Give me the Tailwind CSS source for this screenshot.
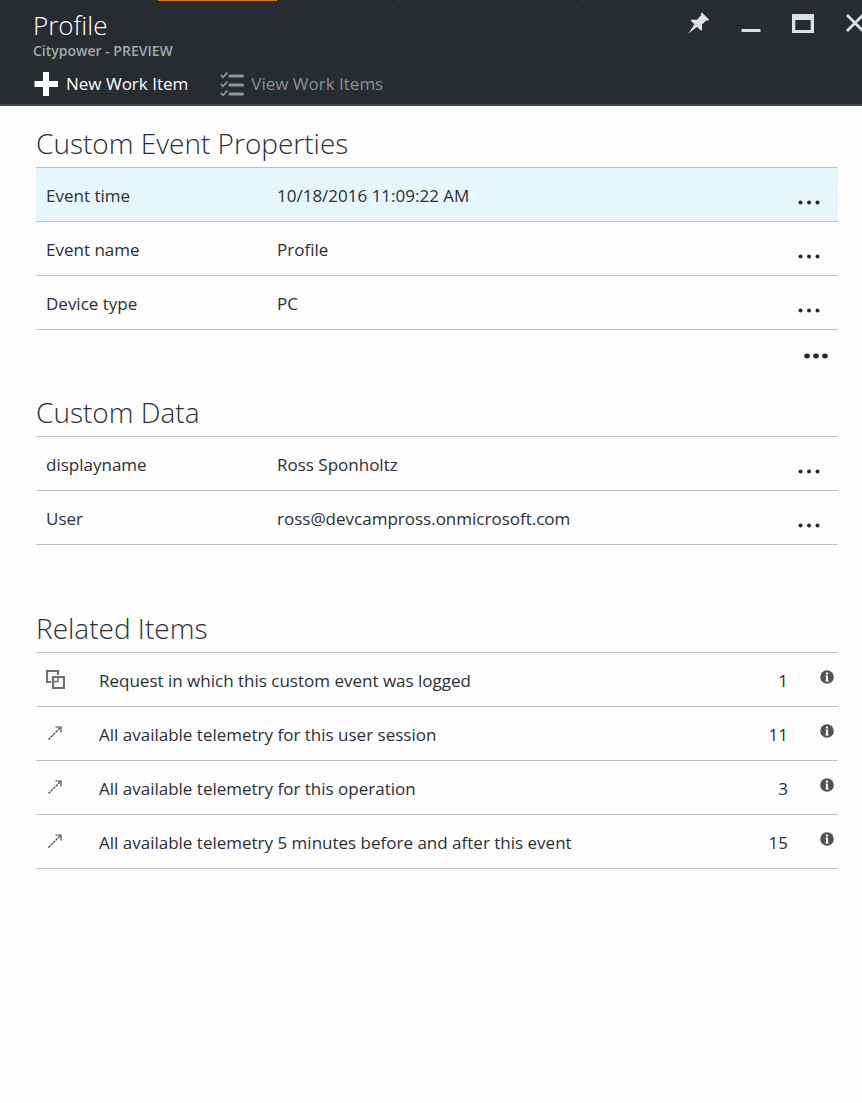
<!DOCTYPE html>
<html lang="en">
<head>
<meta charset="utf-8">
<meta name="viewport" content="width=device-width, initial-scale=1">
<title>Profile</title>
<script src="https://cdn.jsdelivr.net/npm/@tailwindcss/browser@4"></script>
</head>
<body class="min-h-screen bg-[#fdfdfd] font-['Open_Sans','Noto_Sans',sans-serif] text-[17px] text-[#2b3036]">
<svg class="hidden" aria-hidden="true">
  <symbol id="dots" viewBox="0 0 22 5"><g fill="#25292e"><circle cx="2.5" cy="2.5" r="2"/><circle cx="11" cy="2.5" r="2"/><circle cx="19.5" cy="2.5" r="2"/></g></symbol>
  <symbol id="arrow" viewBox="0 0 14 14"><path d="M.5 13.5 12 2" fill="none" stroke="#41464b" stroke-width="1.3" stroke-dasharray="2.600 .8"/><path d="M7.5 1H13v5.5" fill="none" stroke="#41464b" stroke-width="1.2"/></symbol>
  <symbol id="info" viewBox="0 0 14 14"><circle cx="7" cy="7" r="6.8" fill="#505357"/><path d="M6 2.5h2v2H6zM5.5 5.6H8v5h.7v.9H5.4v-.9H6V6.5h-.5z" fill="#fff"/></symbol>
</svg>

<header class="relative flex justify-between overflow-hidden border-b-2 border-[#43474b] bg-[#272c30]">
  <div class="absolute inset-x-0 top-0 flex h-px" aria-hidden="true">
    <span class="w-[158px]"></span><span class="w-[119px] bg-[#d87a10]"></span>
    <span class="w-[61px] border-r border-[#4b4f53]"></span><span class="w-[62px] border-r border-[#4b4f53]"></span><span class="w-[61px] border-r border-[#4b4f53]"></span><span class="w-[61px] border-r border-[#4b4f53]"></span><span class="w-[62px] border-r border-[#4b4f53]"></span>
  </div>
  <div class="pt-2 pl-[33px]">
    <h1 class="text-[26px] leading-[34px] font-light text-white">Profile</h1>
    <p class="text-[14px] leading-[18px] font-semibold text-[#a5a8ab]">Citypower - PREVIEW</p>
    <div class="flex h-11 items-center gap-8 pt-1 text-[17px]">
      <button type="button" class="flex items-center gap-2 text-white">
        <svg class="size-[25px]" viewBox="0 0 25 25" fill="#fff" aria-hidden="true"><path d="M10 0h6v9h9v6h-9v9h-6v-9H1.500V9H10z"/></svg>
        New Work Item
      </button>
      <button type="button" class="flex items-center gap-[7px] text-[#8d9093]">
        <svg class="h-[25px] w-6" viewBox="0 0 24 25" fill="none" stroke="#929598" aria-hidden="true"><path stroke-width="3" stroke-linecap="round" d="M10 4h12.500M10 13h12.500M10 22h12.500"/><path stroke-width="1.700" d="m.7 3 2.300 2.200L7.500.5M.7 12 3 14.200 7.500 9.500M.7 21 3 23.200 7.500 18.500"/></svg>
        View Work Items
      </button>
    </div>
  </div>
  <div class="-mr-[19px] flex h-[46px] shrink-0 text-[#dfe0e1]">
    <button type="button" aria-label="Pin" class="flex w-[52px] items-center justify-center"><svg class="size-[22px]" viewBox="0 0 22 22" fill="currentColor"><path d="m14 .5 7 7-.7 1.200-2-.3-4.300 4.200.2 5.200-1.200.9-3.800-3.700L.3 21.500 6.500 12.300 2.800 8.700l.9-1.200 5.200.2L13 3.400l-.2-2z"/></svg></button>
    <button type="button" aria-label="Minimize" class="flex w-[52px] items-center justify-center"><svg class="size-[20px]" viewBox="0 0 20 20" fill="currentColor"><path d="M.5 16h19v3H.5z"/></svg></button>
    <button type="button" aria-label="Maximize" class="flex w-[52px] items-center justify-center"><svg class="h-[19px] w-[22px]" viewBox="0 0 22 19" fill="currentColor"><path fill-rule="evenodd" d="M0 0h22v19H0zM3.300 6v10h15.400V6z"/></svg></button>
    <button type="button" aria-label="Close" class="flex w-[52px] items-center justify-center"><svg class="size-[20px]" viewBox="0 0 20 20" fill="none" stroke="currentColor" stroke-width="2.700"><path d="m2 2 16 16M18 2 2 18"/></svg></button>
  </div>
</header>

<main class="pt-[17px] pr-6 pl-9">
  <section class="relative pb-[62px]">
    <h2 class="border-b border-[#bfc0c1] pb-1 text-[28px] leading-10 font-light">Custom Event Properties</h2>
    <table class="w-full table-fixed border-separate border-spacing-0 text-left">
      <colgroup><col class="w-[231px]"><col><col class="w-[58px]"></colgroup>
      <tbody>
        <tr class="bg-[#e5f6fd]"><th scope="row" class="h-[54px] border-b border-[#bfc0c1] pt-0.5 pl-[10px] font-normal">Event time</th><td class="border-b border-[#bfc0c1] pt-0.5 pl-[10px]">10/18/2016 11:09:22 AM</td><td class="border-b border-[#bfc0c1] pr-[18px]"><button type="button" aria-label="More for Event time" class="flex w-full justify-end pt-4"><svg class="h-[5px] w-[22px]"><use href="#dots"/></svg></button></td></tr>
        <tr><th scope="row" class="h-[54px] border-b border-[#bfc0c1] pt-0.5 pl-[10px] font-normal">Event name</th><td class="border-b border-[#bfc0c1] pt-0.5 pl-[10px]">Profile</td><td class="border-b border-[#bfc0c1] pr-[18px]"><button type="button" aria-label="More for Event name" class="flex w-full justify-end pt-4"><svg class="h-[5px] w-[22px]"><use href="#dots"/></svg></button></td></tr>
        <tr><th scope="row" class="h-[54px] border-b border-[#bfc0c1] pt-0.5 pl-[10px] font-normal">Device type</th><td class="border-b border-[#bfc0c1] pt-0.5 pl-[10px]">PC</td><td class="border-b border-[#bfc0c1] pr-[18px]"><button type="button" aria-label="More for Device type" class="flex w-full justify-end pt-4"><svg class="h-[5px] w-[22px]"><use href="#dots"/></svg></button></td></tr>
      </tbody>
    </table>
    <button type="button" aria-label="Show more properties" class="absolute right-[10px] bottom-[33px]"><svg class="h-[6px] w-6" viewBox="0 0 24 6" fill="#25292e"><ellipse cx="3" cy="3" rx="2.800" ry="2.400"/><ellipse cx="12" cy="3" rx="2.800" ry="2.400"/><ellipse cx="21" cy="3" rx="2.800" ry="2.400"/></svg></button>
  </section>

  <section class="pb-[63px]">
    <h2 class="border-b border-[#bfc0c1] pb-1 text-[28px] leading-10 font-light">Custom Data</h2>
    <table class="w-full table-fixed border-separate border-spacing-0 text-left">
      <colgroup><col class="w-[231px]"><col><col class="w-[58px]"></colgroup>
      <tbody>
        <tr><th scope="row" class="h-[54px] border-b border-[#bfc0c1] pt-0.5 pl-[10px] font-normal">displayname</th><td class="border-b border-[#bfc0c1] pt-0.5 pl-[10px]">Ross Sponholtz</td><td class="border-b border-[#bfc0c1] pr-[18px]"><button type="button" aria-label="More for displayname" class="flex w-full justify-end pt-4"><svg class="h-[5px] w-[22px]"><use href="#dots"/></svg></button></td></tr>
        <tr><th scope="row" class="h-[54px] border-b border-[#bfc0c1] pt-0.5 pl-[10px] font-normal">User</th><td class="border-b border-[#bfc0c1] pt-0.5 pl-[10px]">ross@devcampross.onmicrosoft.com</td><td class="border-b border-[#bfc0c1] pr-[18px]"><button type="button" aria-label="More for User" class="flex w-full justify-end pt-4"><svg class="h-[5px] w-[22px]"><use href="#dots"/></svg></button></td></tr>
      </tbody>
    </table>
  </section>

  <section>
    <h2 class="border-b border-[#bfc0c1] pb-1 text-[28px] leading-10 font-light">Related Items</h2>
    <ul>
      <li class="flex h-[54px] items-center border-b border-[#bfc0c1] pt-0.5 pr-1">
        <span class="flex w-[63px] pb-0.5 pl-[10px]"><svg class="size-[19px]" viewBox="0 0 19 19" fill="none" stroke="#6d7073" stroke-width="2.200" aria-hidden="true"><path d="M5 12H1V1h11v4"/><path d="M7 7h11v11H7z"/><path stroke-width="1.600" d="M7 11.500h5V7"/></svg></span>
        <a href="#request" class="grow">Request in which this custom event was logged</a>
        <span class="w-[31px] text-right">1</span>
        <button type="button" aria-label="About request" class="pb-2 pl-8"><svg class="size-[14px]"><use href="#info"/></svg></button>
      </li>
      <li class="flex h-[54px] items-center border-b border-[#bfc0c1] pt-0.5 pr-1">
        <span class="flex w-[63px] pb-1 pl-3"><svg class="size-[14px]" aria-hidden="true"><use href="#arrow"/></svg></span>
        <a href="#session" class="grow">All available telemetry for this user session</a>
        <span class="w-[31px] text-right">11</span>
        <button type="button" aria-label="About session telemetry" class="pb-2 pl-8"><svg class="size-[14px]"><use href="#info"/></svg></button>
      </li>
      <li class="flex h-[54px] items-center border-b border-[#bfc0c1] pt-0.5 pr-1">
        <span class="flex w-[63px] pb-1 pl-3"><svg class="size-[14px]" aria-hidden="true"><use href="#arrow"/></svg></span>
        <a href="#operation" class="grow">All available telemetry for this operation</a>
        <span class="w-[31px] text-right">3</span>
        <button type="button" aria-label="About operation telemetry" class="pb-2 pl-8"><svg class="size-[14px]"><use href="#info"/></svg></button>
      </li>
      <li class="flex h-[54px] items-center border-b border-[#bfc0c1] pt-0.5 pr-1">
        <span class="flex w-[63px] pb-1 pl-3"><svg class="size-[14px]" aria-hidden="true"><use href="#arrow"/></svg></span>
        <a href="#nearby" class="grow">All available telemetry 5 minutes before and after this event</a>
        <span class="w-[31px] text-right">15</span>
        <button type="button" aria-label="About nearby telemetry" class="pb-2 pl-8"><svg class="size-[14px]"><use href="#info"/></svg></button>
      </li>
    </ul>
  </section>
</main>
</body>
</html>
